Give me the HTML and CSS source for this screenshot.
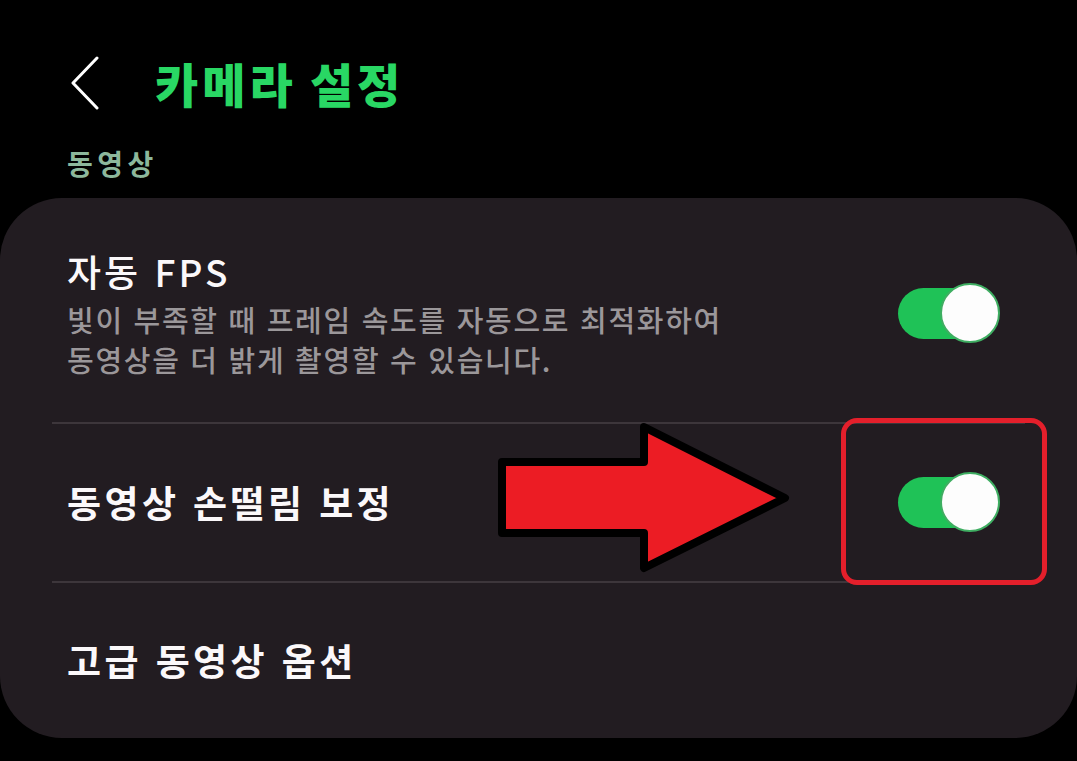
FILE: index.html
```html
<!DOCTYPE html>
<html lang="ko">
<head>
<meta charset="utf-8">
<link rel="stylesheet" href="styles.css">
</head>
<body>
<div class="page">
  <header class="header">
    <svg class="back" width="32" height="54" viewBox="0 0 32 54"><path d="M28 2 L4 27 L28 52" fill="none" stroke="#fff" stroke-width="3" stroke-linecap="round" stroke-linejoin="round"/></svg>
    <h1 class="title">카메라 설정</h1>
  </header>
  <div class="section-label">동영상</div>
  <div class="card">
    <div class="row row-first">
      <div class="row-text">
        <div class="row-title">자동 FPS</div>
        <div class="row-desc">빛이 부족할 때 프레임 속도를 자동으로 최적화하여<br>동영상을 더 밝게 촬영할 수 있습니다.</div>
      </div>
      <div class="toggle"><span class="track"></span><span class="thumb"></span></div>
    </div>
    <div class="divider"></div>
    <div class="row row-mid">
      <div class="row-title strong">동영상 손떨림 보정</div>
      <div class="toggle"><span class="track"></span><span class="thumb"></span></div>
    </div>
    <div class="divider"></div>
    <div class="row row-last">
      <div class="row-title strong">고급 동영상 옵션</div>
    </div>
    <svg class="arrow" width="300" height="160" viewBox="0 0 300 160"><polygon points="7,42 149,42 149,7 290,78 149,148 149,113 7,113" fill="#ec1c24" stroke="#000" stroke-width="8" stroke-linejoin="round"/></svg>
    <div class="highlight"></div>
  </div>
</div>
</body>
</html>
```

FILE: styles.css
```css
html, body {
  margin: 0;
  padding: 0;
  background: #000;
}
body {
  width: 1077px;
  height: 761px;
  overflow: hidden;
  font-family: "Noto Sans CJK KR", "Noto Sans", sans-serif;
}
.page {
  display: flex;
  flex-direction: column;
}
.header {
  display: flex;
  align-items: center;
  padding-top: 50px;
  padding-left: 69px;
  height: 66px;
  gap: 54px;
}
.back {
  display: block;
  flex: none;
}
.title {
  margin: 0;
  font-size: 47px;
  font-weight: 900;
  line-height: 66px;
  color: #29d764;
  letter-spacing: 4px;
  word-spacing: -4px;
}
.section-label {
  margin-top: 30px;
  padding-left: 67px;
  font-size: 28px;
  line-height: 34px;
  font-weight: 700;
  color: #8db89c;
  letter-spacing: 4.5px;
}
.card {
  position: relative;
  margin-top: 18px;
  background: #221c21;
  border-radius: 62px;
  height: 540px;
  display: flex;
  flex-direction: column;
}
.row {
  display: flex;
  align-items: center;
  justify-content: space-between;
  padding-left: 67px;
  padding-right: 75px;
}
.row-first {
  height: 225px;
  box-sizing: border-box;
  padding-top: 6px;
}
.row-mid {
  height: 157px;
}
.row-last {
  height: 156px;
}
.row-title {
  font-size: 37px;
  line-height: 48px;
  font-weight: 500;
  color: #fbf8fa;
  letter-spacing: 3px;
}
.row-title.strong {
  font-weight: 700;
  letter-spacing: 3.4px;
}
.row-desc {
  margin-top: 4px;
  font-size: 29px;
  line-height: 40px;
  color: #9b979a;
  font-weight: 500;
  letter-spacing: 1.7px;
}
.divider {
  height: 2px;
  margin: 0 52px;
  background: #3d363b;
  flex: none;
}
.toggle {
  position: relative;
  width: 104px;
  height: 62px;
  flex: none;
}
.track {
  position: absolute;
  left: 0;
  top: 6px;
  width: 96px;
  height: 51px;
  border-radius: 26px;
  background: #1fc257;
}
.thumb {
  position: absolute;
  right: 2px;
  top: 1px;
  width: 56px;
  height: 56px;
  border-radius: 50%;
  background: #fdfdfd;
  border: 2px solid #3fae62;
}
.arrow {
  position: absolute;
  left: 495px;
  top: 222px;
}
.highlight {
  position: absolute;
  left: 841px;
  top: 220px;
  width: 196px;
  height: 157px;
  border: 5px solid #e41f2b;
  border-radius: 16px;
}
```
